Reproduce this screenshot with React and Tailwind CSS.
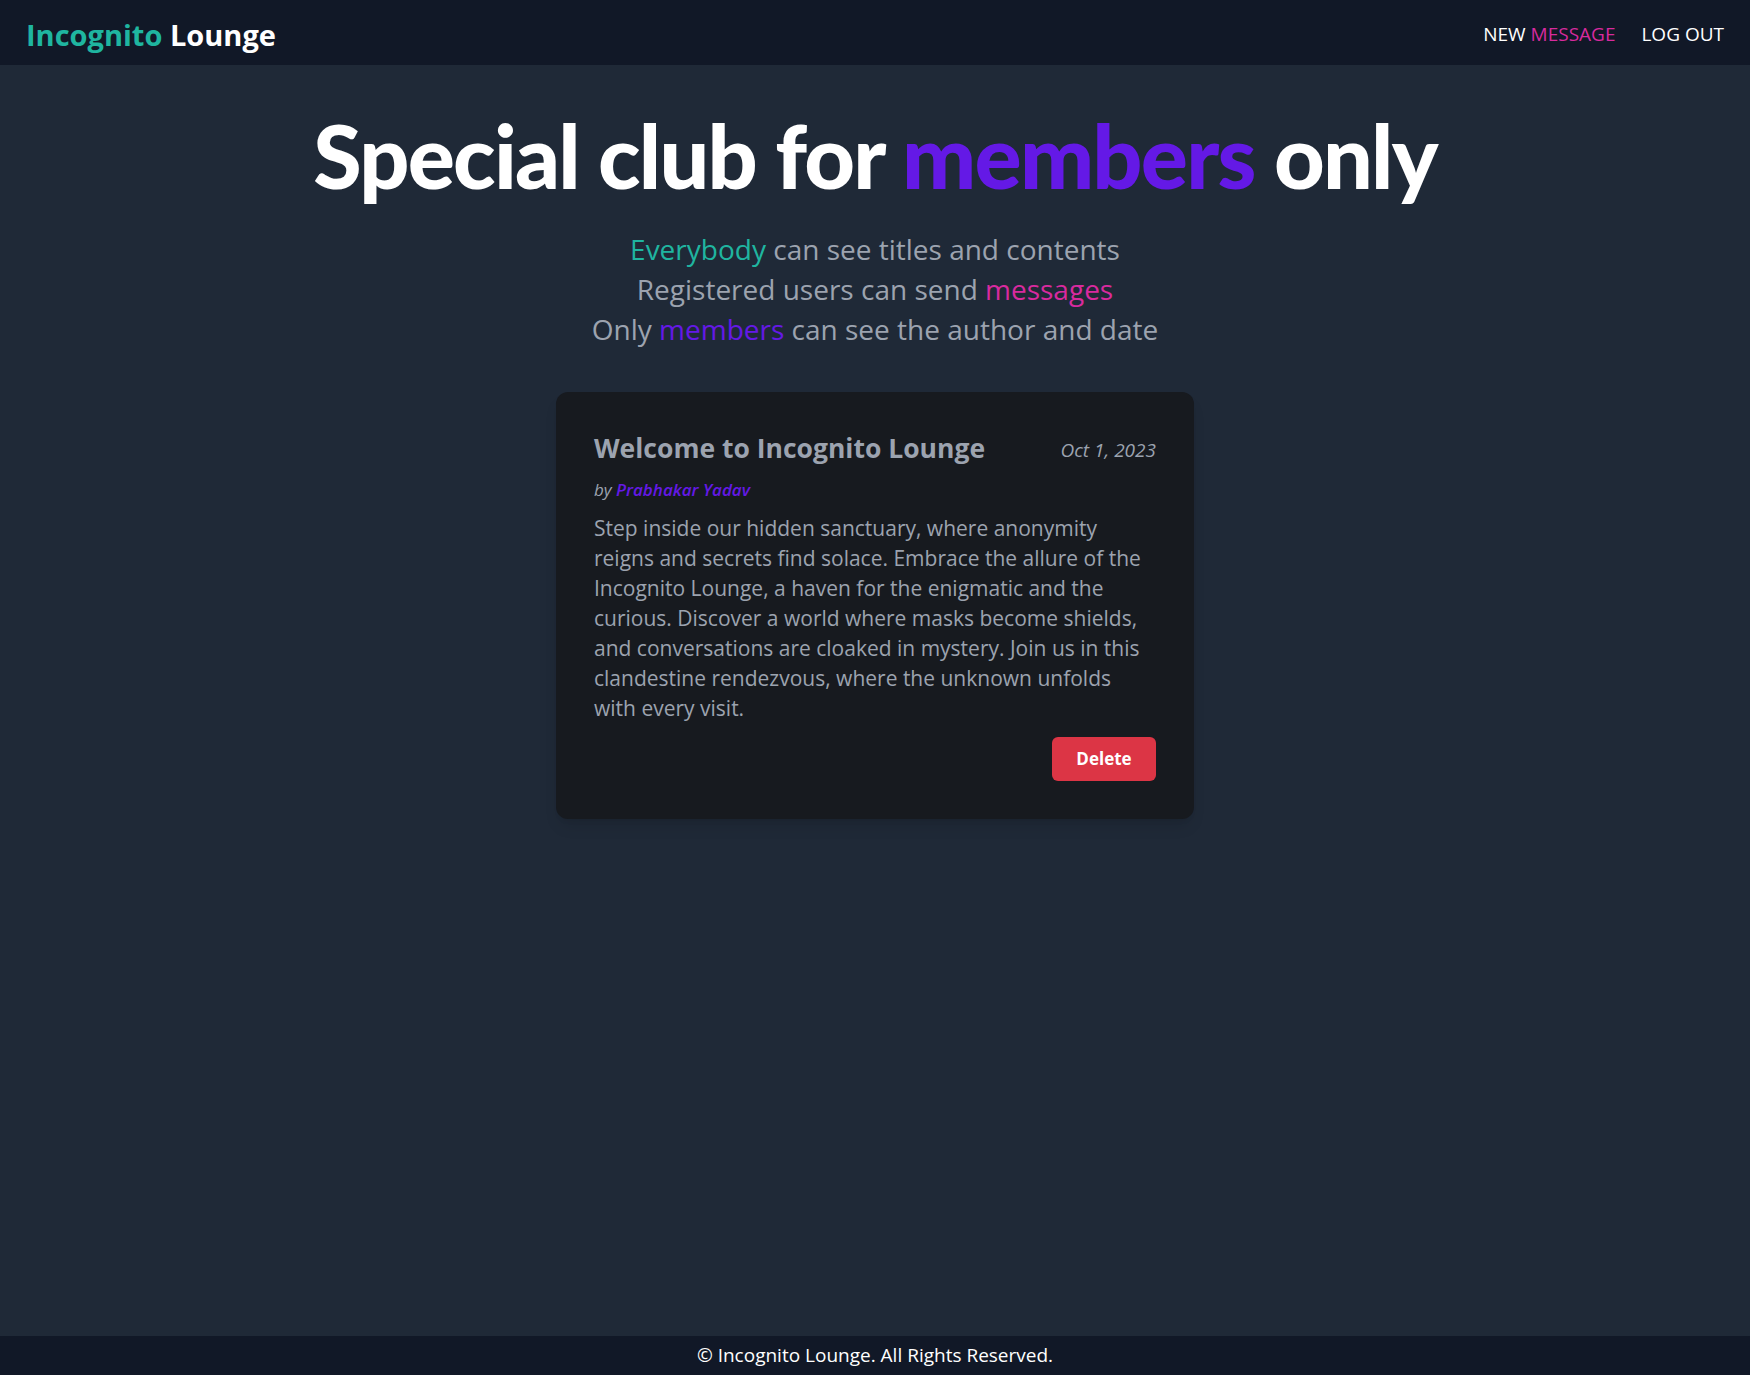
const Navbar = () => {
  return (
    <nav className="h-[65px] bg-[#111827] flex items-center justify-between px-[26px]">
      <a href="#" className="text-[29px] font-bold leading-none pt-[3px]">
        <span className="text-[#1fb5a0]">Incognito</span>{" "}
        <span className="text-white">Lounge</span>
      </a>
      <div className="flex items-center gap-[26px] text-[19px] text-white pt-[3px]">
        <a href="#">
          NEW <span className="text-[#d82a9e]">MESSAGE</span>
        </a>
        <a href="#">LOG OUT</a>
      </div>
    </nav>
  );
};

const MessageCard = ({ title, date, author, text }) => {
  return (
    <div className="w-[638px] bg-[#171a1f] rounded-xl px-[38px] pt-[40px] pb-[38px] shadow-lg">
      <div className="flex items-start justify-between">
        <h2 className="text-[26.5px] font-bold leading-tight text-[#9ca3af]">{title}</h2>
        <span className="text-[19px] italic text-[#9ca3af] pt-[4px]">{date}</span>
      </div>
      <p className="mt-[12px] text-[17px] italic text-[#9ca3af]">
        by <span className="font-semibold text-[#6419e6]">{author}</span>
      </p>
      <p className="mt-[10px] text-[21px] leading-[30px] text-[#9ca3af]">{text}</p>
      <div className="flex justify-end mt-[14px]">
        <button className="w-[104px] h-[44px] rounded-md bg-[#dc3545] text-white font-bold text-[17px]">
          Delete
        </button>
      </div>
    </div>
  );
};

export default function App() {
  return (
    <div className="min-h-screen flex flex-col bg-[#1f2937] font-['Open_Sans',sans-serif]">
      <Navbar />
      <main className="flex-1 flex flex-col items-center">
        <h1 className="mt-[46px] font-['Lato',sans-serif] text-[88px] font-black leading-none tracking-[-0.02em] text-white">
          Special club for <span className="text-[#6419e6]">members</span> only
        </h1>
        <div className="mt-[30px] text-[28px] leading-[40px] text-[#9ca3af] text-center">
          <p>
            <span className="text-[#1fb5a0]">Everybody</span> can see titles and contents
          </p>
          <p>
            Registered users can send <span className="text-[#d82a9e]">messages</span>
          </p>
          <p>
            Only <span className="text-[#6419e6]">members</span> can see the author and date
          </p>
        </div>
        <div className="mt-[43px] mb-[40px]">
          <MessageCard
            title="Welcome to Incognito Lounge"
            date="Oct 1, 2023"
            author="Prabhakar Yadav"
            text="Step inside our hidden sanctuary, where anonymity reigns and secrets find solace. Embrace the allure of the Incognito Lounge, a haven for the enigmatic and the curious. Discover a world where masks become shields, and conversations are cloaked in mystery. Join us in this clandestine rendezvous, where the unknown unfolds with every visit."
          />
        </div>
      </main>
      <footer className="h-[39px] bg-[#111827] flex items-center justify-center text-[19px] text-white">
        © Incognito Lounge. All Rights Reserved.
      </footer>
    </div>
  );
}
